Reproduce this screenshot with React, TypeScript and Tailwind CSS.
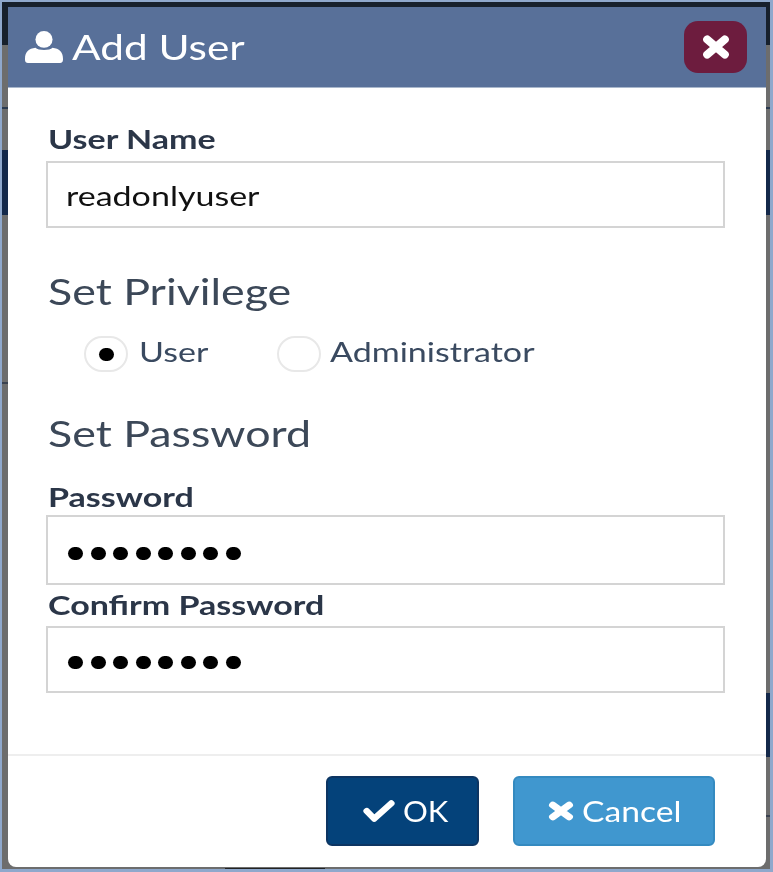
import React from "react";

const stretch = "inline-block origin-left scale-x-[1.26] whitespace-nowrap";
const headStretch = "inline-block origin-left scale-x-[1.21] whitespace-nowrap";

function Input({ children, h }: { children: React.ReactNode; h: string }) {
  return (
    <div className={`flex items-center border-2 border-[#d4d4d4] bg-white pl-[18px] text-[#111] text-[27px] ${h}`}>
      {children}
    </div>
  );
}

function Dots({ pad }: { pad: string }) {
  return (
    <div className={`flex gap-[7.5px] pl-[2px] ${pad}`}>
      {[0, 1, 2, 3, 4, 5, 6, 7].map((i) => (
        <span key={i} className="h-[13px] w-[15px] rounded-full bg-black" />
      ))}
    </div>
  );
}

function Radio({ checked }: { checked?: boolean }) {
  return (
    <span className="flex h-[36px] w-[44px] items-center justify-center rounded-full border-2 border-[#e8e8e8] bg-white">
      {checked && <span className="h-[13px] w-[15px] rounded-full bg-black" />}
    </span>
  );
}

function XIcon({ className }: { className: string }) {
  return (
    <svg viewBox="0 0 24 24" preserveAspectRatio="none" className={className} fill="none" stroke="currentColor" strokeWidth="6.5" strokeLinecap="round">
      <path d="M5 6L19 18M19 6L5 18" />
    </svg>
  );
}

export default function App() {
  return (
    <div
      className="relative h-[872px] w-[773px] overflow-hidden bg-[#8fa8cc] pt-[2px] text-[#2d3748] blur-[0.6px]"
      style={{ fontFamily: "Lato, 'Noto Sans', sans-serif" }}
    >
      <div className="relative ml-[2px] mr-[3px] flex h-[867px] flex-col bg-[#6d6d6d] pl-[6px] pr-[4px] pt-[5px]">
        <div className="absolute inset-x-0 top-0 h-[43px] bg-[#17202c]" />
        <div className="absolute inset-x-0 top-[105px] h-[2px] bg-[#2b3a50]" />
        <div className="absolute inset-x-0 top-[148px] h-[65px] bg-[#14294a]" />
        <div className="absolute left-0 top-[380px] h-[2px] w-[6px] bg-[#3a4250]" />
        <div className="absolute right-0 top-[691px] h-[64px] w-[4px] bg-[#14294a]" />
        <div className="absolute right-0 top-[813px] h-[2px] w-[4px] bg-[#3a4250]" />
        <div className="absolute bottom-0 left-[223px] h-[1px] w-[100px] bg-[#222]" />
        <div className="relative flex h-[860px] flex-col overflow-hidden rounded-b-[8px] bg-white">
          <div className="flex h-[81px] items-center justify-between border-b border-[#a9b7cc] bg-[#587099] pl-[17px] pr-[19px]">
            <div className="flex items-center gap-[9px] text-white">
              <svg viewBox="0 0 40 38" preserveAspectRatio="none" className="h-[32px] w-[38px]" fill="currentColor">
                <ellipse cx="20" cy="10" rx="9" ry="10" />
                <path d="M3 38C0 38 0 35 0 33C0 25 4 21 11 20C14 23.5 26 23.5 29 20C36 21 40 25 40 33C40 35 40 38 37 38Z" />
              </svg>
              <span className={`${headStretch} pb-[2px] text-[35px] leading-none`}>Add User</span>
            </div>
            <button className="flex h-[52px] w-[63px] items-center justify-center rounded-[14px] bg-[#6d1c3e] text-white">
              <XIcon className="h-[30px] w-[30px]" />
            </button>
          </div>

          <div className="flex flex-1 flex-col pl-[38px] pr-[41px]">
            <label className="mt-[34px] pl-[2px] text-[27px] font-bold leading-[34px] text-[#2b3648]">
              <span className={stretch}>User Name</span>
            </label>
            <div className="mt-[5px]">
              <Input h="h-[67px]">
                <span className={`${stretch} pt-[4px]`}>readonlyuser</span>
              </Input>
            </div>

            <h2 className="mt-[41px] pl-[2px] text-[37px] leading-[44px] text-[#3c4858]">
              <span className={headStretch}>Set Privilege</span>
            </h2>
            <div className="mt-[23px] flex items-center pl-[38px] text-[27px] text-[#3a4a60]">
              <Radio checked />
              <span className="-mt-[4px] ml-[11px] w-[138px]">
                <span className={stretch}>User</span>
              </span>
              <Radio />
              <span className="-mt-[4px] ml-[9px]">
                <span className={stretch}>Administrator</span>
              </span>
            </div>

            <h2 className="mt-[38px] pl-[2px] text-[37px] leading-[44px] text-[#3c4858]">
              <span className={headStretch}>Set Password</span>
            </h2>
            <label className="mt-[25px] pl-[2px] text-[27px] font-bold leading-[34px] text-[#2b3648]">
              <span className={stretch}>Password</span>
            </label>
            <div className="mt-[1px]">
              <Input h="h-[70px]"><Dots pad="pt-[8px]" /></Input>
            </div>
            <label className="mt-[3px] pl-[2px] text-[27px] font-bold leading-[34px] text-[#2b3648]">
              <span className={stretch}>Confirm Password</span>
            </label>
            <div className="mt-[4px]">
              <Input h="h-[67px]"><Dots pad="pt-[6px]" /></Input>
            </div>
          </div>

          <div className="flex h-[113px] items-center justify-end gap-[34px] border-t-2 border-[#eeeeee] pr-[51px] pb-[2px]">
            <button className="flex h-[70px] w-[153px] items-center justify-center gap-[7px] rounded-[6px] border-2 border-[#0d3562] bg-[#04427a] pl-[2px] text-[29px] text-white">
              <svg viewBox="0 0 36 28" preserveAspectRatio="none" className="h-[24px] w-[34px]" fill="none" stroke="currentColor" strokeWidth="7" strokeLinecap="round" strokeLinejoin="round">
                <path d="M5 14L13 23L31 5" />
              </svg>
              <span className="inline-block origin-left scale-x-[1.07]">OK</span>
            </button>
            <button className="flex h-[70px] w-[202px] items-center justify-center gap-[7px] rounded-[6px] border-2 border-[#348ac0] bg-[#4097cf] pr-[14px] text-[29px] text-white">
              <XIcon className="h-[24px] w-[28px]" />
              <span className="inline-block origin-left scale-x-[1.16]">Cancel</span>
            </button>
          </div>
        </div>
      </div>
    </div>
  );
}
